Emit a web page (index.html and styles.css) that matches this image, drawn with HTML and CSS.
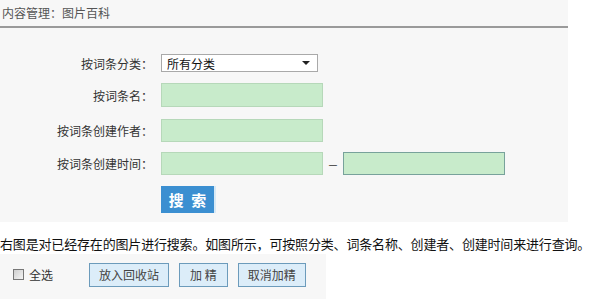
FILE: index.html
```html
<!DOCTYPE html>
<html lang="zh-CN">
<head>
  <meta charset="UTF-8">
  <title>内容管理：图片百科</title>
  <link rel="stylesheet" href="styles.css">
</head>
<body>
  <div class="panel">
    <div class="crumb">内容管理：图片百科</div>

    <div class="form">
      <div class="row row-select">
        <label class="label">按词条分类：</label>
        <div class="select">
          <span>所有分类</span>
          <span class="arrow"></span>
        </div>
      </div>
      <div class="row row-name">
        <label class="label">按词条名：</label>
        <div class="input"></div>
      </div>
      <div class="row row-author">
        <label class="label">按词条创建作者：</label>
        <div class="input"></div>
      </div>
      <div class="row row-time">
        <label class="label">按词条创建时间：</label>
        <div class="input"></div>
        <span class="dash">—</span>
        <div class="input input-active"></div>
      </div>
      <div class="row row-btn">
        <span class="label"></span>
        <button class="search">搜 索</button>
      </div>
    </div>
  </div>

  <p class="desc">右图是对已经存在的图片进行搜索。如图所示，可按照分类、词条名称、创建者、创建时间来进行查询。</p>

  <div class="toolbar">
    <label class="check"><span class="box"></span>全选</label>
    <button class="btn">放入回收站</button>
    <button class="btn btn-narrow">加 精</button>
    <button class="btn">取消加精</button>
  </div>
</body>
</html>
```

FILE: styles.css
```css
* {
  margin: 0;
  padding: 0;
  box-sizing: border-box;
}

html, body {
  width: 100%;
  height: 100%;
  background: #fff;
  overflow: hidden;
  font-family: "Noto Sans CJK SC", "Noto Sans", sans-serif;
  font-size: 12px;
  color: #333;
}

.panel {
  width: 568px;
  height: 222px;
  background: #f7f7f7;
}

.crumb {
  height: 28px;
  padding: 6px 0 0 2px;
  line-height: 14px;
  color: #555;
  border-bottom: 2px solid #9a9a9a;
}

.form {
  padding-top: 26px;
}

.row {
  display: flex;
  align-items: center;
}

.label {
  width: 153px;
  margin-right: 8px;
  text-align: right;
  color: #333;
}

.row-select { height: 18px; }
.row-name { height: 24px; margin-top: 11px; }
.row-author { height: 23px; margin-top: 12px; }
.row-time { height: 23px; margin-top: 10px; }
.row-btn { height: 27px; margin-top: 11px; }

.select {
  width: 157px;
  height: 18px;
  background: #fff;
  border: 1px solid #a9a9a9;
  display: flex;
  align-items: center;
  justify-content: space-between;
  padding: 0 7px 0 5px;
  color: #111;
}

.arrow {
  width: 0;
  height: 0;
  border-left: 4px solid transparent;
  border-right: 4px solid transparent;
  border-top: 4px solid #222;
}

.input {
  width: 162px;
  height: 100%;
  background: #c8ebcb;
  border: 1px solid #b6d8b9;
}

.input-active {
  border-color: #78a29b;
}

.dash {
  width: 20px;
  text-align: center;
  font-size: 10px;
  color: #333;
}

.search {
  width: 55px;
  height: 27px;
  background: #3b8fd1;
  border: none;
  border-right: 2px solid #d7e9f5;
  color: #fff;
  font-family: inherit;
  font-size: 15px;
  font-weight: bold;
  letter-spacing: 2px;
  padding-left: 2px;
}

.desc {
  margin-top: 14px;
  font-size: 13px;
  letter-spacing: -0.17px;
  line-height: 16px;
  color: #111;
  white-space: nowrap;
}

.toolbar {
  width: 326px;
  height: 47px;
  margin-top: 2px;
  background: #f7f7f7;
  display: flex;
  align-items: center;
  padding: 0 0 6px 13px;
}

.check {
  display: flex;
  align-items: center;
  gap: 5px;
  margin-right: 36px;
  color: #333;
}

.box {
  width: 11px;
  height: 11px;
  border: 1px solid #777;
  background: linear-gradient(135deg, #cfcfcf, #f4f4f4);
}

.btn {
  height: 24px;
  padding: 0 9px;
  margin-right: 10px;
  background: #dcedf9;
  border: 1px solid #6c9bbb;
  color: #444;
  font-family: inherit;
  font-size: 12px;
}

.btn-narrow {
  padding: 0 10px;
}
```
